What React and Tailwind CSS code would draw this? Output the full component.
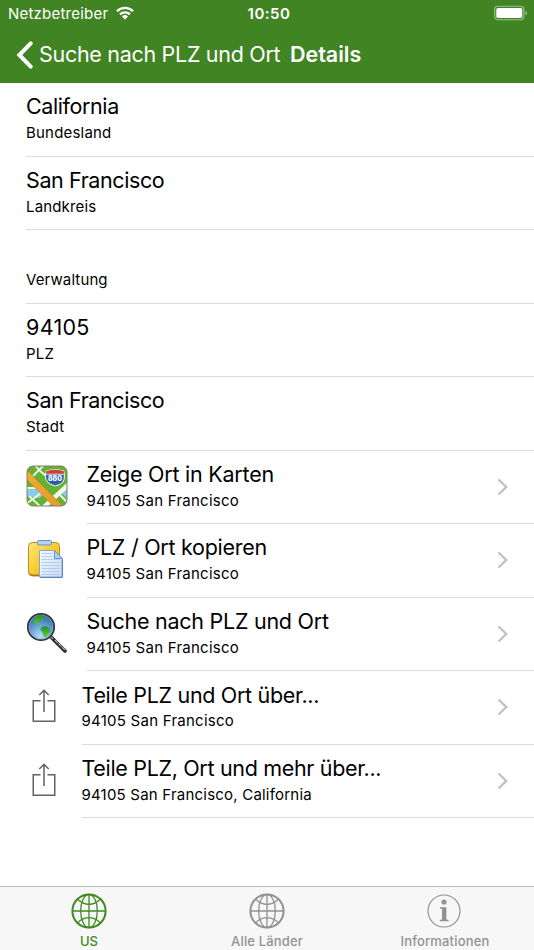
import React from "react";

const infoRows = [
  { title: "California", sub: "Bundesland", tt: "tracking-[-0.4px]", st: "tracking-[0.2px]" },
  { title: "San Francisco", sub: "Landkreis", tt: "tracking-[-0.4px]", st: "tracking-[0.15px]" },
  { title: "", sub: "Verwaltung", tt: "", st: "tracking-[0.12px]" },
  { title: "94105", sub: "PLZ", tt: "tracking-[0.3px]", st: "tracking-[0.2px]" },
  { title: "San Francisco", sub: "Stadt", tt: "tracking-[-0.4px]", st: "tracking-[0.2px]" },
];

function MapIcon() {
  return (
    <svg className="mb-[2px]" width="42" height="42" viewBox="0 0 42 42">
      <defs>
        <clipPath id="mapclip"><rect x="1" y="1" width="40" height="40" rx="6" /></clipPath>
        <linearGradient id="road" x1="0" y1="0" x2="1" y2="1">
          <stop offset="0" stopColor="#efad38" /><stop offset="1" stopColor="#e49a25" />
        </linearGradient>
      </defs>
      <g clipPath="url(#mapclip)">
        <rect width="42" height="42" fill="#67b132" />
        <path d="M0 23h13l6 6-6 4-13-2z" fill="#8bcbe9" />
        <path d="M42 20v14l-8-7z" fill="#8bcbe9" />
        <g stroke="#f3f7ea" fill="none">
          <path d="M0 23h12M0 39l15-11M3 31l13 12M9 0l4 5L7 11M13 5l7 6M13 5l5-5" strokeWidth="1.800" />
          <path d="M17 43L42 20" strokeWidth="4.500" />
          <path d="M32 28l10 10" strokeWidth="2" />
        </g>
        <path d="M-3 6L37 46" stroke="#c88a27" strokeWidth="7.200" />
        <path d="M-3 6L37 46" stroke="url(#road)" strokeWidth="6" />
      </g>
      <rect x="1" y="1" width="40" height="40" rx="6" fill="none" stroke="#7a806f" strokeWidth="1" />
      <path d="M20.500 5.500q3 1 4.500-1 3 1 4 0 2 1 4 0 1.500 2 4.500 1 2 7-.5 11.500-2 2.500-7.500 4-6-1.500-8-4-3.500-4.500-1-11.500z" fill="#2863aa" stroke="#fff" strokeWidth="1" />
      <path d="M20.500 5.500q3 1 4.500-1 3 1 4 0 2 1 4 0 1.500 2 4.500 1l.6 3.500H19.900z" fill="#d63d35" />
      <path d="M20 9.200h18" stroke="#fff" strokeWidth=".8" />
      <text x="29" y="15.800" textAnchor="middle" fontFamily="Inter, sans-serif" fontSize="7" fontWeight="800" fill="#fff">880</text>
    </svg>
  );
}

function ClipboardIcon() {
  return (
    <svg className="mb-[2px]" width="42" height="42" viewBox="0 0 42 42">
      <defs>
        <linearGradient id="board" x1="0" y1="0" x2="1" y2="1">
          <stop offset="0" stopColor="#ffe878" /><stop offset=".5" stopColor="#fccb2d" /><stop offset="1" stopColor="#eaa511" />
        </linearGradient>
        <linearGradient id="sheet" x1="0" y1="0" x2="1" y2="1">
          <stop offset="0" stopColor="#f5faff" /><stop offset="1" stopColor="#c5dcf5" />
        </linearGradient>
      </defs>
      <rect x="2.500" y="3.500" width="31" height="33.500" rx="4" fill="url(#board)" stroke="#bb8b24" />
      <path d="M4 34.500q1 1.600 3 1.700h8" fill="none" stroke="#7e6530" />
      <rect x="11.500" y="1.500" width="14" height="4.500" rx="1.200" fill="#b6d2f1" stroke="#6490c7" />
      <path d="M13.500 11.500h15l7.500 8v18.500H13.500z" fill="url(#sheet)" stroke="#7fa6d4" />
      <path d="M36.500 20v18.500H14" fill="none" stroke="#4772a9" strokeWidth=".8" />
      <path d="M28.500 11.500v8H36z" fill="#a7d2f9" stroke="#5f91cb" />
      <path d="M15.500 14.500h11M15.500 17.500h11M15.500 20.500h18M15.500 23.500h18M15.500 26.500h18M15.500 29.500h18M15.500 32.500h18M15.500 35.500h18" stroke="#b5cde8" />
    </svg>
  );
}

function SearchGlobeIcon() {
  return (
    <svg className="mb-[2px]" width="42" height="42" viewBox="0 0 42 42">
      <defs>
        <radialGradient id="ocean" cx=".5" cy=".85" r=".85">
          <stop offset="0" stopColor="#b5ddff" /><stop offset=".45" stopColor="#6ba7df" /><stop offset="1" stopColor="#2b5e97" />
        </radialGradient>
        <linearGradient id="land" x1="0" y1="0" x2="0" y2="1">
          <stop offset="0" stopColor="#238f2c" /><stop offset="1" stopColor="#63cb39" />
        </linearGradient>
      </defs>
      <path d="M25 25l14 14" stroke="#303030" strokeWidth="3.800" strokeLinecap="round" />
      <path d="M24 24l3.500 3.500M29 28l10 10" stroke="#b5b5b5" strokeWidth="1.200" strokeDasharray="4 1" />
      <circle cx="15" cy="15" r="13.200" fill="url(#ocean)" stroke="#35383b" strokeWidth="1.800" />
      <circle cx="15" cy="15" r="11.900" fill="none" stroke="#9eb6cb" strokeWidth=".6" />
      <path d="M7.500 7q3-3.500 8-3.800l3.500 1.500-2 1.300 1 2-4 .5-2 2.500 2 1.500-1 1-3-1.500-2.500-3z" fill="url(#land)" />
      <path d="M15.500 15l4-1 3 1.500 2 3-2 3.500-2.500 3-2.500-.5-.8-4-2.500-3z" fill="url(#land)" />
    </svg>
  );
}

function ShareIcon() {
  return (
    <svg className="mb-[3px]" width="24" height="34" viewBox="0 0 24 34" fill="none" stroke="#626262" strokeWidth="1.500">
      <path d="M8.500 11.750H1.250v20.500h21.500V11.750H15.500M12 23V1.300M7.300 6L12 1.300l4.700 4.700" />
    </svg>
  );
}

const actionRows = [
  { title: "Zeige Ort in Karten", sub: "94105 San Francisco", icon: <MapIcon />, wide: true, tt: "tracking-[-0.24px]", st: "tracking-[0.25px]" },
  { title: "PLZ / Ort kopieren", sub: "94105 San Francisco", icon: <ClipboardIcon />, wide: true, tt: "tracking-[-0.27px]", st: "tracking-[0.25px]" },
  { title: "Suche nach PLZ und Ort", sub: "94105 San Francisco", icon: <SearchGlobeIcon />, wide: true, tt: "tracking-[-0.26px]", st: "tracking-[0.25px]" },
  { title: "Teile PLZ und Ort über...", sub: "94105 San Francisco", icon: <ShareIcon />, wide: false, tt: "tracking-[-0.32px]", st: "tracking-[0.25px]" },
  { title: "Teile PLZ, Ort und mehr über...", sub: "94105 San Francisco, California", icon: <ShareIcon />, wide: false, tt: "tracking-[-0.33px]", st: "tracking-[0.21px]" },
];

function RowText({ row }) {
  return (
    <div className="flex flex-col items-start whitespace-nowrap pt-[9.300px] text-black">
      <span className={"h-[28.600px] text-[21.5px] leading-[28px] " + row.tt}>{row.title}</span>
      <span className={"h-[22px] text-[15px] leading-[24px] " + row.st}>{row.sub}</span>
    </div>
  );
}

function Globe() {
  return (
    <svg width="36" height="36" viewBox="0 0 36 36" fill="none" stroke="currentColor" strokeWidth="1.300">
      <circle cx="18" cy="18" r="16.600" strokeWidth="2" />
      <ellipse cx="18" cy="18" rx="8.300" ry="16.600" />
      <path d="M18 1.500v33M1.500 18h33M7 6.500q5 4.800 11 4.800t11-4.800M7 29.500q5-4.800 11-4.800t11 4.800" />
    </svg>
  );
}

function Info() {
  return (
    <svg className="mr-[2px]" width="36" height="36" viewBox="0 0 36 36">
      <circle cx="18" cy="18" r="16" fill="none" stroke="currentColor" strokeWidth="1.200" />
      <circle cx="18" cy="9" r="2.600" fill="currentColor" />
      <path d="M14 14.200h6.400v12.200l2.200.6v1.300h-8.800V27l2.200-.6V16l-2-.5z" fill="currentColor" />
    </svg>
  );
}

export default function App() {
  return (
    <div className="flex h-[950px] w-[534px] flex-col overflow-hidden bg-white font-['Inter','Liberation_Sans',sans-serif]">
      <header className="h-[82.6px] shrink-0 bg-[#418424] text-white">
        <div className="grid h-[28px] grid-cols-3 items-center pl-[8px] pr-[6px]">
          <div className="flex items-center gap-[8px]">
            <span className="text-[15px] leading-[28px] tracking-[0.22px]">Netzbetreiber</span>
            <svg className="mb-[2px]" width="18" height="14" viewBox="0 0 18 14" fill="none" stroke="#fff" strokeWidth="2.300">
              <path d="M1 5.200a11.300 11.300 0 0 1 16 0M4 8.400a7 7 0 0 1 10 0" />
              <path d="M6 10.400a4.300 4.300 0 0 1 6 0l-3 3z" fill="#fff" stroke="none" />
            </svg>
          </div>
          <span className="pl-[2px] text-center text-[15px] font-semibold leading-[28px] tracking-[0.5px]">10:50</span>
          <svg className="mb-[2px] justify-self-end" width="34" height="16" viewBox="0 0 34 16">
            <rect x=".7" y="1.200" width="29.200" height="13.600" rx="3.200" fill="none" stroke="#9fc18f" strokeWidth="1.100" />
            <rect x="2.300" y="2.900" width="26" height="10.200" rx="1.700" fill="#fff" />
            <path d="M31.500 5.800q1.500.5 1.500 2.200t-1.500 2.200z" fill="#9fc18f" />
          </svg>
        </div>
        <div className="flex h-[53px] items-center whitespace-nowrap pl-[16px]">
          <svg width="18" height="28" viewBox="0 0 18 28" fill="none" stroke="#fff" strokeWidth="4" strokeLinecap="round" strokeLinejoin="miter">
            <path d="M14.700 2.400L3.400 14l11.300 11.600" />
          </svg>
          <span className="ml-[5px] w-[251px] text-[21.5px] tracking-[-0.3px]">Suche nach PLZ und Ort</span>
          <span className="text-[21.5px] font-semibold tracking-[-0.02px]">Details</span>
        </div>
      </header>
      <main className="flex-1 pt-[0.500px]">
        {infoRows.map((row, i) => (
          <div key={i} className="ml-[26px] h-[73.520px] border-b border-[#dcdcde]">
            <RowText row={row} />
          </div>
        ))}
        {actionRows.map((row, i) => (
          <div key={i} className="flex h-[73.520px]">
            <div className={"flex shrink-0 items-center " + (row.wide ? "w-[86.500px] pl-[26px]" : "w-[81.500px] pl-[32px]")}>{row.icon}</div>
            <div className="flex flex-1 items-center justify-between border-b border-[#dcdcde] pr-[25px]">
              <div className="self-start"><RowText row={row} /></div>
              <svg width="12" height="18" viewBox="0 0 12 18" fill="none" stroke="#c0c0c5" strokeWidth="2.300">
                <path d="M1.500 1.500L9.300 9l-7.800 7.500" />
              </svg>
            </div>
          </div>
        ))}
      </main>
      <nav className="grid h-[64px] shrink-0 grid-cols-3 border-t border-[#bcbcbc] bg-[#f7f7f7] text-[13px] font-medium text-[#929292]">
        <div className="flex flex-col items-center pt-[6px] text-[#3f8a20]">
          <Globe /><span className="mt-[3px] leading-[18px] tracking-[0.1px]">US</span>
        </div>
        <div className="flex flex-col items-center pt-[6px]">
          <Globe /><span className="mt-[3px] leading-[18px] tracking-[0.15px]">Alle Länder</span>
        </div>
        <div className="flex flex-col items-center pt-[6px]">
          <Info /><span className="mt-[3px] leading-[18px] tracking-[0.16px]">Informationen</span>
        </div>
      </nav>
    </div>
  );
}
